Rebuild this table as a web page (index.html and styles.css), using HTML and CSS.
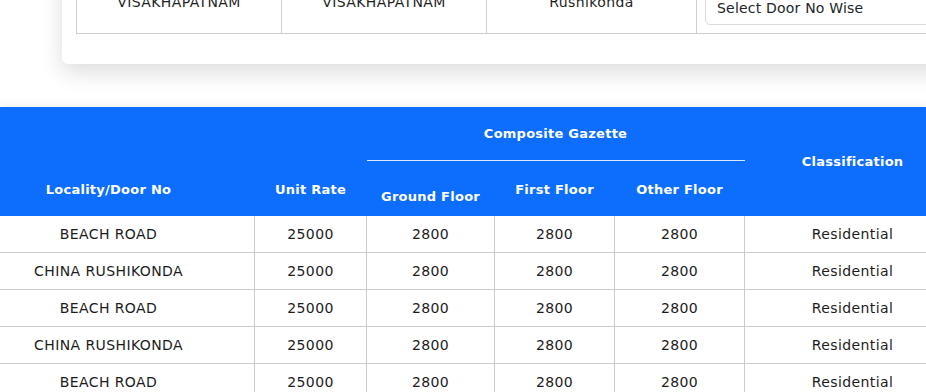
FILE: index.html
```html
<!DOCTYPE html>
<html lang="en">
<head>
<meta charset="utf-8">
<title>Composite Gazette</title>
<link rel="stylesheet" href="styles.css">
</head>
<body>
<main class="page">
  <section class="search-card">
    <table class="search-table">
      <colgroup>
        <col class="c-district">
        <col class="c-mandal">
        <col class="c-village">
        <col class="c-select">
      </colgroup>
      <tr>
        <td>VISAKHAPATNAM</td>
        <td>VISAKHAPATNAM</td>
        <td>Rushikonda</td>
        <td class="select-cell">
          <div class="select-box">Select Door No Wise</div>
        </td>
      </tr>
    </table>
  </section>

  <section class="rates">
    <div class="rates-scroll">
      <table class="rates-table">
        <colgroup>
          <col class="w-locality">
          <col class="w-rate">
          <col class="w-ground">
          <col class="w-first">
          <col class="w-other">
          <col class="w-class">
        </colgroup>
        <thead>
          <tr class="head-top">
            <th rowspan="2">Locality/Door No</th>
            <th rowspan="2">Unit Rate</th>
            <th colspan="3" class="group">Composite Gazette</th>
            <th rowspan="2" class="middle">Classification</th>
          </tr>
          <tr class="head-sub">
            <th class="low">Ground Floor</th>
            <th>First Floor</th>
            <th>Other Floor</th>
          </tr>
        </thead>
        <tbody>
          <tr><td>BEACH ROAD</td><td>25000</td><td>2800</td><td>2800</td><td>2800</td><td>Residential</td></tr>
          <tr><td>CHINA RUSHIKONDA</td><td>25000</td><td>2800</td><td>2800</td><td>2800</td><td>Residential</td></tr>
          <tr><td>BEACH ROAD</td><td>25000</td><td>2800</td><td>2800</td><td>2800</td><td>Residential</td></tr>
          <tr><td>CHINA RUSHIKONDA</td><td>25000</td><td>2800</td><td>2800</td><td>2800</td><td>Residential</td></tr>
          <tr><td>BEACH ROAD</td><td>25000</td><td>2800</td><td>2800</td><td>2800</td><td>Residential</td></tr>
        </tbody>
      </table>
    </div>
  </section>
</main>
</body>
</html>
```

FILE: styles.css
```css
* {
  box-sizing: border-box;
}

html, body {
  margin: 0;
  padding: 0;
  background: #ffffff;
  overflow: hidden;
}

body {
  font-family: "DejaVu Sans", "Open Sans", sans-serif;
  color: #212529;
  font-size: 14px;
}

.page {
  width: 926px;
  height: 392px;
  overflow: hidden;
}

/* ---------- search card (scrolled partly out of view) ---------- */
.search-card {
  margin: -40px 0 0 62px;
  width: 1000px;
  padding: 9px 0 30px 14px;
  background: #fff;
  border-radius: 6px;
  box-shadow: 0 8px 22px rgba(0, 0, 0, 0.14);
}

.search-table {
  border-collapse: collapse;
  table-layout: fixed;
  width: 900px;
  border: 1px solid #cfcfcf;
}

.search-table .c-district { width: 205px; }
.search-table .c-mandal { width: 205px; }
.search-table .c-village { width: 210px; }
.search-table .c-select { width: 280px; }

.search-table td {
  border: 1px solid #cfcfcf;
  height: 64px;
  text-align: center;
  vertical-align: middle;
  padding: 0 8px;
  font-size: 14px;
  letter-spacing: 0.4px;
  color: #1f1f1f;
}

.search-table td.select-cell {
  vertical-align: bottom;
  padding: 0 0 8px 8px;
  text-align: left;
  letter-spacing: 0.2px;
}

.select-box {
  height: 36px;
  line-height: 37px;
  padding: 0 11px;
  border: 1px solid #dcdcdc;
  border-radius: 5px;
  font-size: 14px;
  color: #212529;
}

/* ---------- rates table ---------- */
.rates {
  margin-top: 43px;
  box-shadow: 0 -3px 8px rgba(0, 0, 0, 0.05);
}

.rates-scroll {
  overflow: hidden;
}

.rates-table {
  margin-left: -38px;
  width: 998px;
  border-collapse: collapse;
  table-layout: fixed;
}

.w-locality { width: 292px; }
.w-rate { width: 112px; }
.w-ground { width: 128px; }
.w-first { width: 120px; }
.w-other { width: 130px; }
.w-class { width: 216px; }

.rates-table thead th {
  background: #0d6efd;
  color: #ffffff;
  font-size: 13px;
  font-weight: bold;
  letter-spacing: 0.25px;
  text-align: center;
  vertical-align: bottom;
  line-height: 20px;
  padding: 0 6px 16px;
  border: none;
}

.rates-table .head-top { height: 53px; }
.rates-table .head-sub { height: 56px; }

.rates-table th.group {
  border-bottom: 1px solid rgba(255, 255, 255, 0.85);
}

.rates-table th.middle {
  vertical-align: middle;
  padding: 0 6px;
}

.rates-table th.low {
  padding-bottom: 9px;
}

.rates-table tbody td {
  border: 1px solid #cccccc;
  border-top: none;
  text-align: center;
  vertical-align: middle;
  padding: 8px 6px;
  line-height: 20px;
  font-size: 14px;
  letter-spacing: 0.4px;
  color: #1c1c1c;
}
```
